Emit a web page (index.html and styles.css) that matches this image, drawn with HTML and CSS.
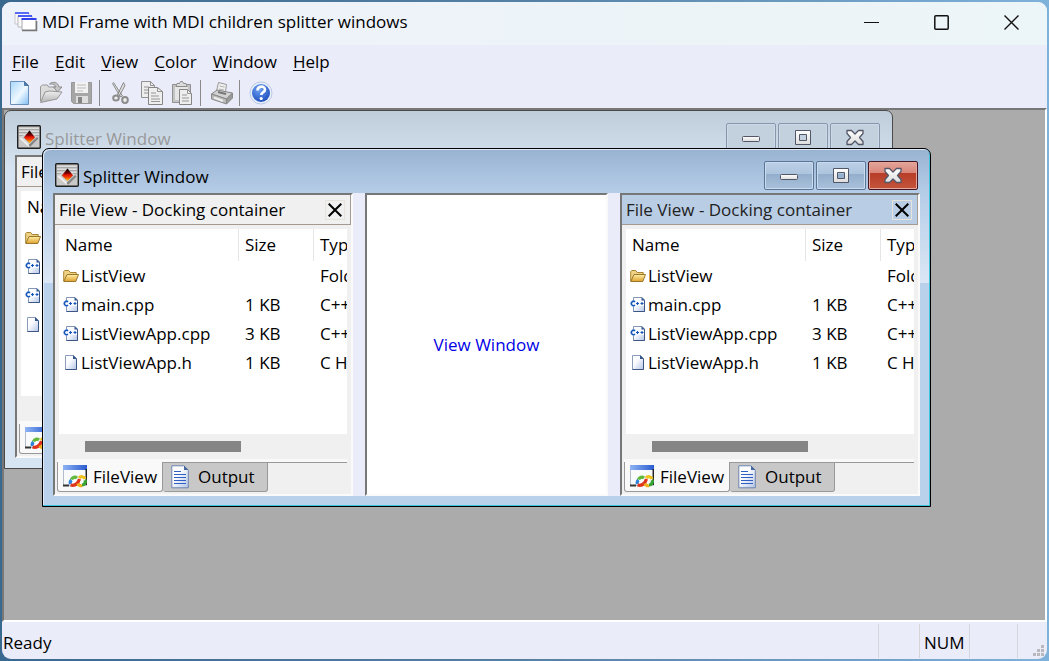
FILE: index.html
```html
<!DOCTYPE html>
<html lang="en">
<head>
<meta charset="utf-8">
<title>MDI Frame with MDI children splitter windows</title>
<link rel="stylesheet" href="styles.css">
</head>
<body>
<svg class="sprite" aria-hidden="true">
  <defs>
    <linearGradient id="g-page" x1="0" y1="0" x2="1" y2="1"><stop offset="0" stop-color="#fff"/><stop offset=".4" stop-color="#fafbff"/><stop offset="1" stop-color="#b4c5e6"/></linearGradient>
    <linearGradient id="g-new" x1="0" y1="0" x2="1" y2="1"><stop offset=".1" stop-color="#b4dcfb"/><stop offset=".55" stop-color="#eef8ff"/><stop offset="1" stop-color="#7fbdf3"/></linearGradient>
    <linearGradient id="g-gray" x1="0" y1="0" x2="0" y2="1"><stop offset="0" stop-color="#efefef"/><stop offset="1" stop-color="#b4b4b4"/></linearGradient>
    <linearGradient id="g-folder" x1="0" y1="0" x2="0" y2="1"><stop offset="0" stop-color="#fff0a8"/><stop offset="1" stop-color="#dfa02c"/></linearGradient>
    <linearGradient id="g-gem" x1="0" y1="0" x2="0" y2="1"><stop offset=".1" stop-color="#100"/><stop offset=".4" stop-color="#8a0000"/><stop offset=".5" stop-color="#e01000"/><stop offset=".7" stop-color="#f04000"/><stop offset="1" stop-color="#ffd000"/></linearGradient>
    <linearGradient id="g-bar" x1="0" y1="0" x2="1" y2="0"><stop offset="0" stop-color="#8fb4f4"/><stop offset="1" stop-color="#2a5cd0"/></linearGradient>
    <linearGradient id="g-glyph" x1="0" y1="0" x2="0" y2="1"><stop offset="0" stop-color="#fff"/><stop offset="1" stop-color="#dcdcdc"/></linearGradient>
    <radialGradient id="g-help" cx=".4" cy=".3" r=".8"><stop offset="0" stop-color="#6fa2f4"/><stop offset="1" stop-color="#1546b8"/></radialGradient>
  </defs>
  <symbol id="i-frames" viewBox="0 0 24 20">
    <path d="M1 1h14v11H1z" fill="#fafafa" stroke="#c8c8d0"/><path d="M1 1h14" stroke="#5a6cf6" stroke-width="2"/>
    <path d="M4 4h14v11H4z" fill="#fafafa" stroke="#b8b8c0"/><path d="M4 4h14" stroke="#4a5cf4" stroke-width="2"/>
    <path d="M8 7h14v11H8z" fill="#fff" stroke="#aaa"/><path d="M7.500 7h15" stroke="#3240f0" stroke-width="2"/><path d="M8 18.500h14.500V9" fill="none" stroke="#777" stroke-width="1.500"/>
  </symbol>
  <symbol id="i-new" viewBox="0 0 24 24"><path d="M2.500.5h14l4 4v19h-18z" fill="url(#g-new)" stroke="#6a8fb8"/><path d="M16.500.5v4h4z" fill="#4b7fb4" stroke="#4b76a4"/></symbol>
  <symbol id="i-open" viewBox="0 0 24 24"><path d="M1.500 20V5.500l2-1.500h5l1 2h8v5" fill="#dcdcdc" stroke="#999"/><path d="M1.500 21.500L6 11l4-1 13 1-5 7z" fill="url(#g-gray)" stroke="#969696"/><path d="M10.500 3C14 0 19 1 20 6h3l-4.500 5L14.500 6H17c-1-3-4-3-6.500-3z" fill="#c6c6c6" stroke="#8c8c8c"/></symbol>
  <symbol id="i-save" viewBox="0 0 24 24"><path d="M1.500 1.500h20v21h-18l-2-2z" fill="#a6a6a6" stroke="#999"/><path d="M5 1h13v11H5z" fill="#f2f2f2"/><path d="M7 4h9M7 7h9M7 10h6" stroke="#bbb"/><path d="M6 15h12v7H6z" fill="#dedede"/><path d="M8 16h4v6H8z" fill="#858585"/></symbol>
  <symbol id="i-cut" viewBox="0 0 24 24"><path d="M3.500 2.500l1-1L13.500 15l-2 1zM14.500 1.500l1.500 3-6.500 12-2-1z" fill="#ddd" stroke="#8c8c8c"/><ellipse cx="7" cy="17" rx="2.800" ry="2.600" fill="#eee" stroke="#8c8c8c" stroke-width="2"/><ellipse cx="16" cy="19" rx="2.800" ry="3" fill="#eee" stroke="#8c8c8c" stroke-width="2"/></symbol>
  <symbol id="i-copy" viewBox="0 0 24 24"><path d="M1.500.5h9l4 4v12h-13z" fill="#eee" stroke="#919191"/><path d="M10.500.5v4h4M4 6h5M4 9h6M4 12h6" fill="none" stroke="#919191"/><path d="M8.500 6.500h9l5 4v13h-14z" fill="#eee" stroke="#858585"/><path d="M17.500 6.500v4h5M11 12h5M11 15h8M11 18h9M11 20.500h9" fill="none" stroke="#959595"/></symbol>
  <symbol id="i-paste" viewBox="0 0 24 24"><path d="M1.500 3.500h18v18h-18z" fill="#c4c4c4" stroke="#919191"/><path d="M4 6h13v13H4z" fill="#e6e6e6"/><path d="M5 5.500l1-3h2.500l1-2h2l1 2H15l1 3z" fill="#ddd" stroke="#8c8c8c"/><path d="M8.500 8.500h8l4 4v11h-12z" fill="#eee" stroke="#858585"/><path d="M16.500 8.500v4h4M11 14h5M11 17h7M11 20h7" fill="none" stroke="#959595"/></symbol>
  <symbol id="i-print" viewBox="0 0 24 24"><path d="M6 12L8.500 1.500l8 2L15 14z" fill="#efefef" stroke="#999"/><path d="M9.500 5l5 1M9 8l5 1" stroke="#b0b0b0"/><path d="M1.500 13L7 9l15.500 3-6 6z" fill="#d2d2d2" stroke="#858585"/><path d="M8 11l8 2" stroke="#777" stroke-width="2"/><path d="M1.500 13l15 5v5l-15-5z" fill="#bbb" stroke="#888"/><path d="M16.500 18l6-6v5l-6 6z" fill="#999" stroke="#888"/><path d="M4 16.500l9 3.500" stroke="#eee" stroke-width="2"/></symbol>
  <symbol id="i-help" viewBox="0 0 24 24"><circle cx="12" cy="12" r="11" fill="#e9f0fc" stroke="#b9c8e2"/><circle cx="12" cy="12" r="9" fill="url(#g-help)"/><path d="M8.500 9.500c0-5 7.500-5 7.500-1 0 3-3.700 2.500-3.700 5.500" fill="none" stroke="#fff" stroke-width="2.600"/><circle cx="12.200" cy="17.500" r="1.600" fill="#fff"/></symbol>
  <symbol id="i-gem" viewBox="0 0 24 24"><rect x=".7" y=".7" width="22.600" height="22.600" rx="1" fill="#c9c9c9" stroke="#202020" stroke-width="1.400"/><path d="M2 4.500h20M2 7.500h20M2 10.500h20" stroke="#a8a8a8"/><path d="M2 3.500h20M2 6.500h20M2 9.500h20" stroke="#dedede"/><path d="M12 6l9.500 7.500-8.500 8.500-10-9z" fill="#d8d8d8"/><path d="M3 13l9.500 8.500" stroke="#f4f4f4" stroke-width="1.500"/><path d="M21.500 13.500l-8.500 8.500-1.500-2 8.500-8z" fill="#858585"/><path d="M12.500 5l6 7.500-6 6-6.500-6z" fill="#b0b0b0"/><path d="M12.500 5.500L18 12.500l-5.500 5.500L7 12.500z" fill="url(#g-gem)"/></symbol>
  <symbol id="i-folder" viewBox="0 0 16 16"><path d="M.7 13V3.500l1-1h4l1.500 2h6v3" fill="#eed386" stroke="#a88430"/><path d="M.8 13.500L4 6.500h11.500l-2.700 7z" fill="url(#g-folder)" stroke="#9a762a"/></symbol>
  <symbol id="i-cpp" viewBox="0 0 16 16"><path d="M3.500.5h8.500l2.500 2.500v11.500h-11z" fill="url(#g-page)" stroke="#8496b5"/><path d="M11.500 0v3.500H15z" fill="#36578c"/><path d="M14.500 3.500v11h-11" fill="none" stroke="#3b5585"/><path d="M0 3h5v7H0zM4 4h10v5H4z" fill="#f6f9ff"/><path d="M5 4.800A2.200 2.200 0 1 0 5 8.200" fill="none" stroke="#1556b8" stroke-width="1.600"/><path d="M6 6.500h3M7.500 5v3M10.500 6.500h3M12 5v3" fill="none" stroke="#1556b8" stroke-width="1.100"/></symbol>
  <symbol id="i-header" viewBox="0 0 16 16"><path d="M2.500.5h8l3 3v11h-11z" fill="url(#g-page)" stroke="#8c9cba"/><path d="M10 0v4h4z" fill="#36578c"/><path d="M13.500 4v10.500h-11" fill="none" stroke="#3b5585"/></symbol>
  <symbol id="i-fileview" viewBox="0 0 24 24"><path d="M.5.500h23v20H.5z" fill="#f8fafc" stroke="#b4bccb"/><path d="M0 0h24v5H0z" fill="url(#g-bar)"/><path d="M23.300 4v16" stroke="#222" stroke-width="1.500"/><path d="M0 20.500h6" stroke="#333" stroke-width="2"/><g fill="none" stroke-width="3.200"><path d="M7.500 19a3.500 3.500 0 0 1 1-4" stroke="#2f83d8"/><path d="M8.500 14.500a3.500 3.500 0 0 1 5.500-1.500" stroke="#62b83a"/><path d="M7.500 20c4 1 7 0 9-6" stroke="#e0331c"/><path d="M16 13a3.500 3.500 0 0 1 6 1" stroke="#f0c21c"/><path d="M22 15a3.500 3.500 0 0 1-3 5" stroke="#3aa537"/><path d="M19 20.500a3 3 0 0 1-4-2" stroke="#f0b01a"/></g></symbol>
  <symbol id="i-output" viewBox="0 0 18 24"><path d="M.8.800h12l4.500 4.500v17.500H.8z" fill="url(#g-page)" stroke="#6d84ae"/><path d="M13 .5v4.500h4.500z" fill="#46679f"/><path d="M3 6.500h7M3 9.500h12M3 12.500h12M3 15.500h12M3 18.500h12" stroke="#2f5fc0"/></symbol>
  <symbol id="w-min" viewBox="0 0 20 20"><rect x="1.500" y="8.500" width="17" height="5" rx="1" fill="url(#g-glyph)" stroke="#535666"/></symbol>
  <symbol id="w-max" viewBox="0 0 20 20"><path d="M2.500 2.500h15v14h-15zM6.500 6.500v6h7v-6z" fill="url(#g-glyph)" fill-rule="evenodd" stroke="#535666" stroke-linejoin="round"/></symbol>
  <symbol id="w-close" viewBox="0 0 20 20"><path d="M2 2.500h4.500l3.500 3.500 3.500-3.500H18v3L14.500 9.500l3.500 4v3h-4.500l-3.500-3.500-3.500 3.500H2v-3L5.500 9.500 2 5.500z" fill="url(#g-glyph)" stroke="#535666" stroke-width="1.300" stroke-linejoin="round"/></symbol>
  <symbol id="x-thin" viewBox="0 0 14 14"><path d="M.7.700l12.600 12.600M13.300.700L.7 13.300" stroke="currentColor" stroke-width="2" fill="none"/></symbol>
</svg>

<main class="frame">
  <header class="titlebar">
    <svg class="app-icon"><use href="#i-frames"/></svg>
    <h1 class="title">MDI Frame with MDI children splitter windows</h1>
    <div class="frame-buttons">
      <button class="frame-button" aria-label="Minimize"><svg class="frame-glyph" viewBox="0 0 16 16"><path d="M0 8.500h15" stroke="#111"/></svg></button>
      <button class="frame-button" aria-label="Maximize"><svg class="frame-glyph" viewBox="0 0 16 16"><rect x=".8" y="1.800" width="13.400" height="13.400" rx="1" fill="none" stroke="#111" stroke-width="1.500"/></svg></button>
      <button class="frame-button" aria-label="Close"><svg class="frame-glyph" viewBox="0 0 16 16"><path d="M.5 1.500l14 14M14.500 1.500l-14 14" stroke="#111" stroke-width="1.400"/></svg></button>
    </div>
  </header>

  <nav class="menubar">
    <button class="menu"><u>F</u>ile</button>
    <button class="menu"><u>E</u>dit</button>
    <button class="menu"><u>V</u>iew</button>
    <button class="menu"><u>C</u>olor</button>
    <button class="menu"><u>W</u>indow</button>
    <button class="menu"><u>H</u>elp</button>
  </nav>

  <div class="toolbar" role="toolbar">
    <button class="tool" aria-label="New"><svg class="tool-icon"><use href="#i-new"/></svg></button>
    <button class="tool" aria-label="Open"><svg class="tool-icon"><use href="#i-open"/></svg></button>
    <button class="tool" aria-label="Save"><svg class="tool-icon"><use href="#i-save"/></svg></button>
    <span class="tool-sep"></span>
    <button class="tool" aria-label="Cut"><svg class="tool-icon"><use href="#i-cut"/></svg></button>
    <button class="tool" aria-label="Copy"><svg class="tool-icon"><use href="#i-copy"/></svg></button>
    <button class="tool" aria-label="Paste"><svg class="tool-icon"><use href="#i-paste"/></svg></button>
    <span class="tool-sep"></span>
    <button class="tool" aria-label="Print"><svg class="tool-icon"><use href="#i-print"/></svg></button>
    <span class="tool-sep"></span>
    <button class="tool" aria-label="Help"><svg class="tool-icon"><use href="#i-help"/></svg></button>
  </div>

  <div class="mdi-client">
    <section class="child child-back">
      <header class="child-title">
        <svg class="child-icon"><use href="#i-gem"/></svg>
        <h2 class="child-name">Splitter Window</h2>
        <div class="child-buttons">
          <button class="child-button" aria-label="Minimize"><svg class="child-glyph"><use href="#w-min"/></svg></button>
          <button class="child-button" aria-label="Maximize"><svg class="child-glyph"><use href="#w-max"/></svg></button>
          <button class="child-button" aria-label="Close"><svg class="child-glyph"><use href="#w-close"/></svg></button>
        </div>
      </header>
      <div class="split">
        <section class="pane">
          <div class="caption"><span class="caption-text">File</span></div>
          <div class="list">
            <table class="files">
              <colgroup><col class="col-name"><col class="col-size"><col class="col-type"></colgroup>
              <thead><tr><th>Name</th><th></th><th></th></tr></thead>
              <tbody>
                <tr><td><svg class="file-icon"><use href="#i-folder"/></svg></td><td></td><td></td></tr>
                <tr><td><svg class="file-icon"><use href="#i-cpp"/></svg></td><td></td><td></td></tr>
                <tr><td><svg class="file-icon"><use href="#i-cpp"/></svg></td><td></td><td></td></tr>
                <tr><td><svg class="file-icon"><use href="#i-header"/></svg></td><td></td><td></td></tr>
              </tbody>
            </table>
          </div>
          <div class="scrollbar"></div>
          <div class="tabs">
            <button class="tab tab-active" aria-label="File view"><svg class="tab-icon"><use href="#i-fileview"/></svg></button>
          </div>
        </section>
        <div class="splitter"></div>
        <div class="view"></div>
        <div class="splitter"></div>
        <div class="pane"></div>
      </div>
    </section>

    <section class="child child-front">
      <header class="child-title">
        <svg class="child-icon"><use href="#i-gem"/></svg>
        <h2 class="child-name">Splitter Window</h2>
        <div class="child-buttons">
          <button class="child-button" aria-label="Minimize"><svg class="child-glyph"><use href="#w-min"/></svg></button>
          <button class="child-button" aria-label="Maximize"><svg class="child-glyph"><use href="#w-max"/></svg></button>
          <button class="child-button child-close" aria-label="Close"><svg class="child-glyph"><use href="#w-close"/></svg></button>
        </div>
      </header>
      <div class="split">
        <section class="pane">
          <div class="caption">
            <span class="caption-text">File View - Docking container</span>
            <button class="caption-close" aria-label="Close pane"><svg class="caption-x"><use href="#x-thin"/></svg></button>
          </div>
          <div class="list">
            <table class="files">
              <colgroup><col class="col-name"><col class="col-size"><col class="col-type"></colgroup>
              <thead><tr><th>Name</th><th>Size</th><th>Type</th></tr></thead>
              <tbody>
                <tr><td><svg class="file-icon"><use href="#i-folder"/></svg>ListView</td><td></td><td>Folder</td></tr>
                <tr><td><svg class="file-icon"><use href="#i-cpp"/></svg>main.cpp</td><td>1 KB</td><td>C++</td></tr>
                <tr><td><svg class="file-icon"><use href="#i-cpp"/></svg>ListViewApp.cpp</td><td>3 KB</td><td>C++</td></tr>
                <tr><td><svg class="file-icon"><use href="#i-header"/></svg>ListViewApp.h</td><td>1 KB</td><td>C Header</td></tr>
              </tbody>
            </table>
          </div>
          <div class="scrollbar"><div class="thumb"></div></div>
          <div class="tabs">
            <button class="tab tab-active"><svg class="tab-icon"><use href="#i-fileview"/></svg>FileView</button>
            <button class="tab tab-idle"><svg class="tab-icon tab-icon-page"><use href="#i-output"/></svg>Output</button>
            <span class="tab-rest"></span>
          </div>
        </section>
        <div class="splitter"></div>
        <div class="view">View Window</div>
        <div class="splitter"></div>
        <section class="pane">
          <div class="caption caption-active">
            <span class="caption-text">File View - Docking container</span>
            <button class="caption-close" aria-label="Close pane"><svg class="caption-x"><use href="#x-thin"/></svg></button>
          </div>
          <div class="list">
            <table class="files">
              <colgroup><col class="col-name"><col class="col-size"><col class="col-type"></colgroup>
              <thead><tr><th>Name</th><th>Size</th><th>Type</th></tr></thead>
              <tbody>
                <tr><td><svg class="file-icon"><use href="#i-folder"/></svg>ListView</td><td></td><td>Folder</td></tr>
                <tr><td><svg class="file-icon"><use href="#i-cpp"/></svg>main.cpp</td><td>1 KB</td><td>C++</td></tr>
                <tr><td><svg class="file-icon"><use href="#i-cpp"/></svg>ListViewApp.cpp</td><td>3 KB</td><td>C++</td></tr>
                <tr><td><svg class="file-icon"><use href="#i-header"/></svg>ListViewApp.h</td><td>1 KB</td><td>C Header</td></tr>
              </tbody>
            </table>
          </div>
          <div class="scrollbar"><div class="thumb"></div></div>
          <div class="tabs">
            <button class="tab tab-active"><svg class="tab-icon"><use href="#i-fileview"/></svg>FileView</button>
            <button class="tab tab-idle"><svg class="tab-icon tab-icon-page"><use href="#i-output"/></svg>Output</button>
            <span class="tab-rest"></span>
          </div>
        </section>
      </div>
    </section>
  </div>

  <footer class="status">
    <span class="status-text">Ready</span>
    <span class="status-cell status-mode"></span>
    <span class="status-cell status-num">NUM</span>
    <span class="status-cell"></span>
    <span class="status-cell status-grip"><svg class="grip" viewBox="0 0 12 12"><path d="M8 0h3v3H8zM4 4h3v3H4zM8 4h3v3H8zM0 8h3v3H0zM4 8h3v3H4zM8 8h3v3H8z" fill="#b9b9bd"/></svg></span>
  </footer>
</main>
</body>
</html>
```
FILE: styles.css
```css
* { box-sizing: border-box; }

body {
  margin: 0;
  height: 100vh;
  padding: 2px;
  overflow: hidden;
  background: linear-gradient(90deg, #39698f, #5580a4 50%, #7fb2da);
  font: 17px/24px "Open Sans", "Noto Sans", sans-serif;
  color: #000;
}

button {
  margin: 0;
  padding: 0;
  border: 0;
  background: none;
  font: inherit;
  color: inherit;
}

svg { display: block; flex: none; }
.sprite { position: absolute; width: 0; height: 0; }

.frame {
  display: flex;
  flex-direction: column;
  height: 100%;
  border-radius: 9px;
  overflow: hidden;
  background: #eaecfa;
}

.titlebar {
  display: flex;
  align-items: center;
  height: 43px;
  padding: 0 0 3px 12px;
  background: linear-gradient(90deg, #eef2fa, #ecf5f7);
}
.app-icon { width: 24px; height: 20px; }
.title { flex: 1; margin: 0 0 0 4px; font-size: 17px; font-weight: 400; }
.frame-buttons { display: flex; }
.frame-button { display: grid; place-items: center; width: 70px; height: 40px; }
.frame-glyph { width: 16px; height: 16px; }

.menubar { display: flex; gap: 16px; height: 33px; padding: 0 10px; }
.menu { white-space: nowrap; }
.menu u { text-underline-offset: 2px; text-decoration-thickness: 1px; }

.toolbar { display: flex; align-items: center; height: 30px; padding-left: 2px; }
.tool { display: grid; place-items: center; width: 31px; height: 30px; }
.tool-icon { width: 24px; height: 24px; }
.tool-sep { width: 8px; height: 26px; border-left: 2px solid transparent; background: linear-gradient(#8a8a8a, #8a8a8a) left / 1px 100% no-repeat; background-origin: padding-box; }

.mdi-client {
  position: relative;
  flex: 1;
  min-height: 0;
  overflow: hidden;
  border: 2px solid;
  border-color: #777 #fff #fff #777;
  background: #ababab;
}

.child {
  position: absolute;
  width: 889px;
  padding: 0 10px 10px;
  border: 1px solid #000;
  border-radius: 7px 7px 0 0;
}
.child-back {
  left: 0;
  top: 0;
  border-color: #4a4a4a;
  background: linear-gradient(#bfcddb, #d7e4f2 60px);
}
.child-front {
  left: 38px;
  top: 38px;
  box-shadow: inset -1px -1px 0 #3cc3df, inset 1px 1px 0 #dfeaf6;
  background: linear-gradient(#98b3d1, #b6cde8 44px, #dbe7f5 134px, #b9d1ea 134px);
}
.child-title { display: flex; height: 44px; padding: 12px 2px 0; }
.child-icon { width: 24px; height: 24px; margin-top: 2px; }
.child-name { flex: 1; margin: 4px 0 0 4px; font-size: 17px; font-weight: 400; }
.child-back .child-name { color: #999; }
.child-buttons { display: flex; gap: 2px; }
.child-button {
  display: grid;
  place-items: center;
  width: 50px;
  height: 29px;
  border: 1px solid #5c7594;
  border-radius: 2px;
  box-shadow: inset 0 0 0 1px #c8dbef;
  background: linear-gradient(#bcd0e6, #adc4de 45%, #93aecb 45%, #a9c1dc);
}
.child-back .child-button { border-color: #8796ad; box-shadow: inset 0 0 0 1px #ccd9e6; background: #c3d1df; }
.child-button.child-close { border-color: #431520; box-shadow: inset 0 0 0 1px #e5a79c; background: linear-gradient(#e4a59a, #d88578 42%, #b73d28 42%, #c5543c); }
.child-glyph { width: 20px; height: 20px; }

.split { display: grid; grid-template-columns: 300px 12px 1fr 12px 300px; height: 303px; }
.splitter { background: #eaecfa; }
.pane, .view { border: 2px solid; border-color: #777 #fafafa #fafafa #777; }
.view { display: grid; place-items: center; background: #fff; color: #0000e6; }
.pane { display: flex; flex-direction: column; min-width: 0; background: #f0f0f0; }

.caption {
  display: flex;
  align-items: center;
  justify-content: space-between;
  height: 30px;
  padding: 1px 5px 0 4px;
  border: solid #a49a92;
  border-width: 0 1px 1px 0;
}
.caption-active { background: #b9cde5; color: #222; }
.caption-close { display: grid; place-items: center; width: 20px; height: 20px; border: 1px solid #e6e2dc; color: #000; }
.caption-x { width: 14px; height: 14px; }

.list { height: 205px; margin: 4px 4px 0; overflow: hidden; background: #fff; }
.files { width: 330px; table-layout: fixed; border-collapse: separate; border-spacing: 0; }
.col-name { width: 180px; }
.col-size { width: 75px; }
.col-type { width: 75px; }
.files th { height: 32px; padding: 0 0 0 6px; border-right: 1px solid #e5e5e5; font-weight: 400; text-align: left; }
.files td { height: 29px; padding: 0 0 0 6px; white-space: nowrap; }
.files td:first-child { padding-left: 4px; }
.file-icon { display: inline-block; width: 16px; height: 16px; margin-right: 2px; vertical-align: -2px; }

.scrollbar { height: 25px; padding: 7px 0 0 30px; }
.thumb { width: 156px; height: 11px; background: #858585; }

.tabs { display: flex; align-items: flex-start; height: 33px; margin: 0 4px 0 2px; border-top: 3px solid #f9f9f9; }
.tab { display: flex; align-items: center; height: 30px; border: 1px solid #999; border-top: 0; border-radius: 0 0 3px 3px; }
.tab-active { width: 106px; gap: 6px; padding-left: 5px; background: #f9f9f9; }
.tab-idle { width: 105px; gap: 9px; padding-left: 8px; border-top: 1px solid #999; border-left: 0; background: #c8c8c8; }
.tab-rest { flex: 1; border-top: 1px solid #999; }
.tab-icon { width: 24px; height: 24px; }
.tab-icon-page { width: 18px; }

.status { display: flex; height: 37px; padding: 2px 0 1px 1px; }
.status-text { flex: 1; padding-top: 7px; }
.status-cell { width: 48px; padding-top: 7px; border-left: 1px solid #d5d5d8; }
.status-mode { width: 41px; }
.status-num { width: 50px; padding-left: 4px; }
.status-grip { display: flex; align-items: flex-end; justify-content: flex-end; width: 30px; padding: 0 2px 1px 0; }
.grip { width: 12px; height: 12px; }
```
